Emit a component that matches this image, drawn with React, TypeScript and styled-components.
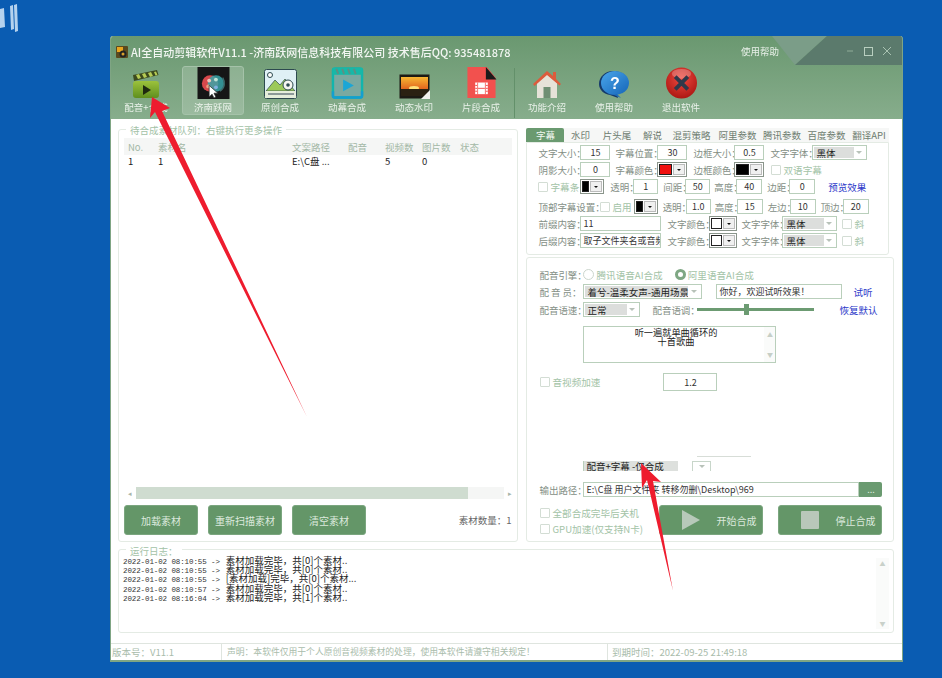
import React from "react";
import styled, { createGlobalStyle } from "styled-components";

const Global = createGlobalStyle`
  html, body { margin: 0; padding: 0; background: #0a5cb2; }
  body { font-family: "Noto Sans CJK SC", "Liberation Sans", sans-serif; font-size: 10px; overflow: hidden; }
  * { box-sizing: border-box; }
`;
const Desktop = styled.div`width: 942px; height: 678px; padding: 36px 0 0 110px; position: relative; background: #0a5cb2; overflow: hidden;`;
const Logo = styled.svg`position: absolute; left: 0; top: 0; filter: blur(.5px);`;
const Overlay = styled.svg`position: absolute; left: 0; top: 0; pointer-events: none; filter: blur(.4px);`;
const Win = styled.div`width: 793px; height: 626px; display: flex; flex-direction: column; background: #fff; border: solid #7fa584; border-width: 0 1px 2px 1px; border-radius: 3px 3px 0 0; overflow: hidden; filter: blur(.5px);`;
const Head = styled.div`height: 83px; flex: none; position: relative; background: linear-gradient(#6a9870, #87ad8c); display: flex; flex-direction: column;`;
const TitleRow = styled.div`height: 30px; display: flex; align-items: center; padding: 2px 0 0 5px; gap: 3px;`;
const Title = styled.div`font-size: 11px; font-weight: 500; color: #f2f6f2; white-space: nowrap;`;
const Corner = styled.svg`position: absolute; right: 0; top: 0;`;
const HelpText = styled.div`position: absolute; left: 630px; top: 8px; font-size: 9.5px; color: #e8f0e8;`;
const Tools = styled.div`display: flex; padding-left: 4px; height: 53px;`;
const Tool = styled.div<{ $active?: boolean }>`
  width: 62px; margin-right: 5px; height: 49px; display: flex; flex-direction: column; align-items: center; justify-content: flex-end;
  border-radius: 3px; border: 1px solid ${p => (p.$active ? "#a5c2a9" : "transparent")}; background: ${p => (p.$active ? "rgba(255,255,255,.18)" : "transparent")};
  color: #e9f1e9; font-size: 9.5px; line-height: 13px; white-space: nowrap;
  svg { display: block; margin-bottom: 2px; }
`;
const ToolSep = styled.div`width: 1px; height: 50px; margin: 2px 1px 0 -3px; background: #63906a;`;
const Main = styled.div`height: 423px; flex: none; display: flex; gap: 8px; padding: 9px 8px 0 7px;`;
const Box = styled.div`border: 1px solid #e4ebe4; border-radius: 3px; position: relative; background: #fff;`;
const Legend = styled.span<{ $top?: number }>`position: absolute; left: 7px; top: ${p => p.$top ?? -6}px; background: #fff; padding: 0 4px; color: #a3c2a7; font-size: 9.5px; line-height: 12px; white-space: nowrap;`;
const LeftPanel = styled(Box)`width: 401px; margin-top: 1px; display: flex; flex-direction: column; padding: 8px 5px 6px;`;
const GridRow = styled.div<{ $head?: boolean }>`
  display: flex; height: ${p => (p.$head ? 17 : 12)}px; align-items: center;
  background: ${p => (p.$head ? "#f5f6f5" : "transparent")};
  color: ${p => (p.$head ? "#a3b8a6" : "#222")}; font-size: 9.5px; white-space: nowrap;
`;
const Cell = styled.div<{ $w: number }>`width: ${p => p.$w}px; flex: none; overflow: hidden; padding-left: 4px;`;
const ListBody = styled.div`flex: 1;`;
const HScroll = styled.div`height: 12px; display: flex; align-items: center; margin: 0 0 6px; gap: 4px; padding-left: 4px; color: #a9b5aa; font-size: 7px;`;
const HTrack = styled.div`flex: 1; height: 12px; background: #f5f6f5;`;
const HThumb = styled.div`width: 332px; height: 12px; background: #cfdcd0;`;
const LeftFoot = styled.div`height: 30px; display: flex; align-items: center; gap: 10px; flex: none;`;
const GreenBtn = styled.div<{ $w: number }>`width: ${p => p.$w}px; height: 30px; flex: none; background: #649668; border: 1px solid #7ba67f; border-radius: 3px; color: #dce9dd; font-size: 10px; display: flex; align-items: center; justify-content: center; gap: 16px;`;
const ActionBtn = styled(GreenBtn)<{ $ml?: number }>`padding-left: 16px; margin-left: ${p => p.$ml ?? 0}px;`;
const Count = styled.div`margin-left: auto; color: #666; font-size: 9.5px; padding-right: 1px;`;
const RightCol = styled.div`width: 368px; display: flex; flex-direction: column;`;
const Tabs = styled.div`display: flex; height: 14px; flex: none; width: 363px; background: #f6f7f6;`;
const Tab = styled.div<{ $w: number; $on?: boolean }>`width: ${p => p.$w}px; display: flex; align-items: center; justify-content: center; font-size: 9.5px; white-space: nowrap; border-radius: 2px 2px 0 0; background: ${p => (p.$on ? "#6a9a70" : "transparent")}; color: ${p => (p.$on ? "#f2f7f2" : "#6e7d70")};`;
const TabBody = styled(Box)`width: 363px; height: 113px; flex: none; padding: 1px 0 0 10px; border-radius: 0 0 3px 3px;`;
const Row = styled.div<{ $h?: number; $top?: number; $ml?: number }>`display: flex; align-items: center; height: ${p => p.$h ?? 17}px; margin-top: ${p => p.$top ?? 0}px; margin-left: ${p => p.$ml ?? 0}px; flex: none;`;
const Label = styled.div<{ $w?: number; $ml?: number }>`width: ${p => (p.$w ? p.$w + "px" : "auto")}; margin-left: ${p => p.$ml ?? 0}px; padding-left: 1px; flex: none; color: #848f86; font-size: 9.5px; white-space: nowrap; letter-spacing: -.05px;`;
const Field = styled.div<{ $w: number; $ml?: number; $left?: boolean; $h?: number }>`
  width: ${p => p.$w}px; height: ${p => p.$h ?? 15}px; margin-left: ${p => p.$ml ?? 0}px; flex: none; border: 1px solid #b9cfbb; background: #fff; color: #333;
  font-size: 9px; display: flex; align-items: center; justify-content: ${p => (p.$left ? "flex-start" : "center")}; padding: ${p => (p.$left ? "0 2px" : "0")}; white-space: nowrap; overflow: hidden;
`;
const Select = styled.div<{ $w: number; $ml?: number; $h?: number }>`
  width: ${p => p.$w}px; height: ${p => p.$h ?? 15}px; margin-left: ${p => p.$ml ?? 0}px; flex: none; border: 1px solid #b9cfbb; background: #fff; display: flex; align-items: stretch; font-size: 9.5px; color: #222; padding: 1px; position: relative;
`;
const SelectText = styled.div<{ $w: number }>`width: ${p => p.$w}px; background: #dcdedc; padding-left: 2px; line-height: 12px; white-space: nowrap; overflow: hidden;`;
const Caret = styled.div`margin-left: auto; width: 0; height: 0; align-self: center; margin-right: 3px; border: 3px solid transparent; border-top-color: #b8c2b9; border-bottom-width: 0;`;
const ColorPick = styled.div<{ $w: number; $ml?: number }>`width: ${p => p.$w}px; margin-left: ${p => p.$ml ?? 0}px; height: 15px; flex: none; border: 1px solid #8a958b; background: #fff; display: flex; align-items: stretch; padding: 1px;`;
const Swatch = styled.div<{ $c: string }>`flex: 1; background: ${p => p.$c}; border: 1px solid #222;`;
const Arrow = styled.div`width: 12px; display: flex; align-items: center; justify-content: center; margin-left: 1px; background: #f0f0f0; border: 1px solid #bbb;
  &::after { content: ""; border: 2.5px solid transparent; border-top-color: #111; border-bottom-width: 0; }
`;
const Check = styled.div<{ $ml?: number }>`width: 10px; height: 10px; margin-left: ${p => p.$ml ?? 0}px; flex: none; border: 1px solid #d3ddd4; border-radius: 1px; background: #fff;`;
const GreenText = styled.div<{ $ml?: number }>`margin-left: ${p => p.$ml ?? 2}px; color: #a3c3a7; font-size: 9.6px; white-space: nowrap;`;
const Link = styled.div<{ $ml: number }>`margin-left: ${p => p.$ml}px; color: #2a37c9; font-size: 9.5px; white-space: nowrap;`;
const LowerPanel = styled(Box)`margin-top: 2px; flex: 1; padding: 8px 0 6px 11px; display: flex; flex-direction: column;`;
const Radio = styled.div<{ $on?: boolean; $ml: number }>`width: 11px; height: 11px; border-radius: 50%; flex: none; margin-left: ${p => p.$ml}px; border: ${p => (p.$on ? "3px solid #7ea783" : "1px solid #ccd6cd")}; background: #fff;`;
const Slider = styled.div`width: 117px; height: 3px; margin-left: 6px; background: #6c9b72; position: relative; flex: none;`;
const Knob = styled.div`position: absolute; left: 47px; top: -4px; width: 5px; height: 11px; background: #6c9b72;`;
const TextBox = styled.div`width: 193px; height: 37px; margin: 8px 0 0 45px; border: 1px solid #b9cfbb; display: flex; flex: none;`;
const TextBoxText = styled.div`flex: 1; text-align: center; font-size: 9.2px; line-height: 9px; color: #222; padding: 1px 0 0 3px;`;
const VBar = styled.div`width: 11px; background: #fafbfa; color: #c6cfc7; font-size: 6px; display: flex; flex-direction: column; justify-content: space-between; align-items: center; padding: 3px 0;`;
const Ghost = styled.div`width: 54px; height: 1px; margin: auto 0 4px 159px; background: #d7ddd7; flex: none;`;
const ClipSelect = styled.div`width: 95px; height: 10px; margin-left: 45px; background: #dde0dd; border-left: 1px solid #b9cfbb; font-size: 9.5px; line-height: 10px; padding-left: 2px; color: #222; overflow: hidden; white-space: nowrap;`;
const ClipCaret = styled.div`width: 19px; height: 10px; margin-left: 14px; border: solid #c8d6ca; border-width: 1px 1px 0 1px; display: flex; align-items: center; justify-content: center; &::after { content: ""; border: 3px solid transparent; border-top-color: #b8c2b9; border-bottom-width: 0; }`;
const Browse = styled.div`width: 23px; height: 15px; flex: none; background: #6a9a70; color: #dde9de; font-size: 9px; text-align: center; line-height: 15px; border-radius: 0 2px 2px 0;`;
const BottomRow = styled.div`display: flex; height: 30px; margin-top: 8px; flex: none;`;
const Checks = styled.div`width: 121px; flex: none; display: flex; flex-direction: column; justify-content: space-between; padding: 2px 0 0 2px; height: 30px;`;
const CheckRow = styled.div`display: flex; align-items: center; height: 12px; white-space: nowrap;`;
const LogBox = styled(Box)`height: 84px; flex: none; margin: 7px 8px 0 7px; padding: 6px 4px 0; display: flex;`;
const LogLines = styled.div`flex: 1;`;
const LogLine = styled.div`height: 9.2px; line-height: 9.2px; white-space: nowrap; font-size: 9.5px; color: #222;`;
const Stamp = styled.span`font-family: "Liberation Mono", monospace; font-size: 7.5px; letter-spacing: -.1px; color: #333; margin-right: 6px;`;
const LogBar = styled.div`width: 13px; margin: 2px 0 3px; background: #fafbfa; display: flex; flex-direction: column; justify-content: space-between; align-items: center; color: #c9d1ca; font-size: 6px; padding: 1px 0;`;
const Status = styled.div`margin-top: auto; height: 17px; flex: none; border-top: 1px solid #dfe5df; display: flex; color: #a9bcab; font-size: 9.5px; line-height: 16px; background: #fff;`;
const StatusCell = styled.div<{ $w?: number; $size?: number }>`width: ${p => (p.$w ? p.$w + "px" : "auto")}; flex: ${p => (p.$w ? "none" : 1)}; font-size: ${p => p.$size ?? 9.5}px; padding-left: ${p => (p.$w ? 1 : 4)}px; border-right: ${p => (p.$w ? "1px solid #dfe5df" : "none")}; white-space: nowrap;`;

const Clapper = () => (
  <svg width="30" height="30" viewBox="0 0 30 30">
    <defs><linearGradient id="cg" x1="0" y1="0" x2="0" y2="1"><stop offset="0" stopColor="#9cc23c" /><stop offset="1" stopColor="#5f8f1e" /></linearGradient></defs>
    <path d="M2 6 26 1l1.500 5L3 12z" fill="#3c4a1e" />
    <path d="M5 6l3-1 2 4-3 1zM11 5l3-1 2 4-3 1zM17 4l3-1 2 4-3 1zM23 3l2-.5 1.500 3.500-2 .6z" fill="#b6cc55" />
    <rect x="2" y="12" width="26" height="17" rx="3" fill="url(#cg)" />
    <path d="M12 16l8 5-8 5z" fill="#1f2a10" />
  </svg>
);
const Reel = () => (
  <svg width="33" height="33" viewBox="0 0 33 33">
    <rect width="33" height="33" fill="#161616" />
    <circle cx="13" cy="17" r="8.500" fill="#d9484c" />
    <circle cx="19" cy="17" r="8.500" fill="#38a5a8" opacity=".85" />
    <circle cx="12" cy="14" r="2" fill="#f2c4b8" /><circle cx="19" cy="13" r="2" fill="#bfe3d6" /><circle cx="11" cy="20" r="2" fill="#f0a080" /><circle cx="19" cy="21" r="2" fill="#7fb0e0" />
    <path d="M26 11c3 5 2 11-3 14" stroke="#3d6b6b" strokeWidth="1.500" fill="none" />
    <path d="M12 19v12l3-3 2 4 2-1-2-4h4z" fill="#fff" stroke="#222" strokeWidth=".7" />
  </svg>
);
const Landscape = () => (
  <svg width="33" height="30" viewBox="0 0 33 30">
    <rect x=".5" y=".5" width="32" height="29" rx="2" fill="#dff0f5" stroke="#2d4a4f" />
    <circle cx="6" cy="6" r="2.500" fill="#fff" stroke="#2d4a4f" />
    <path d="M2 22l9-11 5 5 5-6 10 12z" fill="#9cc95a" stroke="#2d4a4f" strokeWidth=".7" />
    <rect x="1" y="22" width="31" height="7" fill="#e5eedc" />
    <path d="M4 25h26" stroke="#345" strokeWidth="1" />
    <circle cx="24" cy="16" r="5" fill="#f6f6f0" stroke="#2d4a4f" /><circle cx="24" cy="16" r="1.800" fill="#2d4a4f" />
  </svg>
);
const VideoIco = () => (
  <svg width="33" height="33" viewBox="0 0 33 33">
    <rect x="1.500" y="1.500" width="30" height="30" rx="2" fill="#7aa9a0" stroke="#12b5ad" strokeWidth="2.500" />
    <rect x="1" y="1" width="31" height="7" fill="#17b8a8" />
    <path d="M5 2l2 5M11 2l2 5M17 2l2 5M23 2l2 5" stroke="#5f8f83" strokeWidth="2" />
    <path d="M12 13l11 6-11 6z" fill="#1ba6d6" />
    <path d="M1.500 25v5a1.500 1.500 0 0 0 1.500 1.500h27a1.500 1.500 0 0 0 1.500-1.500v-5" stroke="#149fd0" strokeWidth="2.500" fill="none" />
  </svg>
);
const Sunset = () => (
  <svg width="31" height="25" viewBox="0 0 31 25">
    <defs><linearGradient id="sg" x1="0" y1="0" x2="0" y2="1"><stop offset="0" stopColor="#f7b733" /><stop offset="1" stopColor="#e1651e" /></linearGradient></defs>
    <rect x=".5" y=".5" width="30" height="24" fill="#1c1a14" />
    <rect x="2" y="3" width="27" height="12" fill="url(#sg)" />
    <ellipse cx="15" cy="14" rx="5" ry="2" fill="#ffe27a" />
    <rect x="2" y="15" width="27" height="7" fill="#2a2112" />
    <path d="M31 16v9H22z" fill="#f2f2ee" />
  </svg>
);
const Film = () => (
  <svg width="31" height="33" viewBox="0 0 31 33">
    <path d="M1 0h20l9 11v21H1z" fill="#f2514e" />
    <path d="M20 0l11 13H20z" fill="#1c1a1a" />
    <rect x="9" y="16" width="13" height="12" fill="#fff" />
    <path d="M11.500 16v12M19.500 16v12" stroke="#f2514e" strokeWidth=".8" />
    <path d="M9 19h2M9 22h2M9 25h2M20 19h2M20 22h2M20 25h2M12 22h7" stroke="#f2514e" strokeWidth="1" />
  </svg>
);
const House = () => (
  <svg width="30" height="30" viewBox="0 0 30 30">
    <path d="M5 14 15 5l10 9v15H5z" fill="#e6e2d8" />
    <rect x="11.500" y="18" width="7" height="11" fill="#6f8f73" />
    <path d="M1 15 15 2l6 5V3h3v7l5 5-1.500 1.500L15 6 2.500 17z" fill="#dd5b3c" />
  </svg>
);
const Bubble = () => (
  <svg width="32" height="30" viewBox="0 0 32 30">
    <defs><linearGradient id="bb" x1="0" y1="0" x2="1" y2="1"><stop offset="0" stopColor="#4aa6ea" /><stop offset="1" stopColor="#1565b8" /></linearGradient></defs>
    <path d="M15 2C7 2 1 8 1 15c0 6 5 10 11 11l8 3-1-4c7-2 11-6 11-11 0-7-6-12-15-12z" fill="#153a6b" />
    <ellipse cx="17" cy="14" rx="14" ry="12" fill="url(#bb)" />
    <path d="M19 25l4 4-7-3z" fill="#1a6cbd" />
    <text x="17" y="20" textAnchor="middle" fontSize="16" fontWeight="700" fill="#fff" fontFamily="Liberation Sans, sans-serif">?</text>
  </svg>
);
const Exit = () => (
  <svg width="33" height="33" viewBox="0 0 33 33">
    <defs><radialGradient id="rr" cx=".5" cy=".35" r=".7"><stop offset="0" stopColor="#f04a40" /><stop offset="1" stopColor="#a81410" /></radialGradient></defs>
    <circle cx="16.500" cy="16.500" r="16" fill="url(#rr)" />
    <ellipse cx="16.500" cy="7" rx="10" ry="5" fill="#fff" opacity=".25" />
    <path d="M10 10l13 13M23 10 10 23" stroke="#30394a" strokeWidth="4" />
  </svg>
);
const AppIco = () => (
  <svg width="12" height="12" viewBox="0 0 12 12">
    <rect width="12" height="12" rx="1" fill="#5a4a1e" /><rect x="1" y="1" width="6" height="5" fill="#e8a51e" /><circle cx="7" cy="8" r="3.500" fill="#222" /><circle cx="7" cy="8" r="1.500" fill="#d9a12c" />
  </svg>
);
const Play = () => (<svg width="18" height="20" viewBox="0 0 18 20"><path d="M0 0l18 10L0 20z" fill="#b7c9b9" /></svg>);
const Stop = () => (<svg width="18" height="18" viewBox="0 0 18 18"><rect width="18" height="18" rx="1" fill="#b9c7ba" /></svg>);

const tools: [React.ReactNode, string, boolean?][] = [
  [<Clapper />, "配音+合成"], [<Reel />, "济南跃网", true], [<Landscape />, "原创合成"], [<VideoIco />, "动幕合成"], [<Sunset />, "动态水印"], [<Film />, "片段合成"],
];
const tools2: [React.ReactNode, string][] = [[<House />, "功能介绍"], [<Bubble />, "使用帮助"], [<Exit />, "退出软件"]];
const tabs: [string, number][] = [["字幕", 38], ["水印", 32], ["片头尾", 41], ["解说", 30], ["混剪策略", 48], ["阿里参数", 44], ["腾讯参数", 45], ["百度参数", 44], ["翻译API", 41]];
const cols = [30, 134, 56, 37, 37, 38, 30];
const logs = [
  ["2022-01-02 08:10:55 ->", "素材加载完毕，共[0]个素材.."],
  ["2022-01-02 08:10:55 ->", "素材加载完毕，共[0]个素材.."],
  ["2022-01-02 08:10:55 ->", "[素材加载]完毕，共[0]个素材..."],
  ["2022-01-02 08:10:57 ->", "素材加载完毕，共[0]个素材.."],
  ["2022-01-02 08:16:04 ->", "素材加载完毕，共[1]个素材.."],
];

const Color = ({ c, w, ml }: { c: string; w: number; ml?: number }) => (
  <ColorPick $w={w} $ml={ml}><Swatch $c={c} /><Arrow /></ColorPick>
);
const Sel = ({ t, w, tw, ml }: { t: string; w: number; tw: number; ml?: number }) => (
  <Select $w={w} $ml={ml}><SelectText $w={tw}>{t}</SelectText><Caret /></Select>
);

export default function App() {
  return (
    <Desktop>
      <Global />
      <Logo width="20" height="34" viewBox="0 0 20 34">
        <path d="M0 9l4-1 1 19-5 1zM10 6l3-1 1 24-3 1zM14 5l3-1 1 27-3 1z" fill="#b5d2ee" />
      </Logo>
      <Win>
        <Head>
          <Corner width="131" height="29" viewBox="0 0 131 29">
            <path d="M1 0H56L24 29z" fill="#7b9d88" />
            <path d="M56 0H131V29H24z" fill="#5b7a6c" />
            <path d="M76 15h6" stroke="#90ab97" strokeWidth="1" />
            <rect x="93.500" y="11.500" width="8" height="8" fill="none" stroke="#b9cfc0" strokeWidth="1" />
            <path d="M112 11l8 8M120 11l-8 8" stroke="#a9c2b2" strokeWidth="1" />
          </Corner>
          <TitleRow><AppIco /><Title>AI全自动剪辑软件V11.1 -济南跃网信息科技有限公司 技术售后QQ:  935481878</Title></TitleRow>
          <HelpText>使用帮助</HelpText>
          <Tools>
            {tools.map(([i, l, a]) => <Tool key={l} $active={a}>{i}{l}</Tool>)}
            <ToolSep />
            {tools2.map(([i, l]) => <Tool key={l}>{i}{l}</Tool>)}
          </Tools>
        </Head>
        <Main>
          <LeftPanel>
            <Legend>待合成素材队列：右键执行更多操作</Legend>
            <GridRow $head>
              {["No.", "素材名", "文案路径", "配音", "视频数", "图片数", "状态"].map((t, i) => <Cell key={t} $w={cols[i]}>{t}</Cell>)}
            </GridRow>
            <ListBody>
              <GridRow>
                {["1", "1", "E:\\C盘 ...", "", "5", "0", ""].map((t, i) => <Cell key={i} $w={cols[i]}>{t}</Cell>)}
              </GridRow>
            </ListBody>
            <HScroll>◂<HTrack><HThumb /></HTrack>▸</HScroll>
            <LeftFoot>
              <GreenBtn $w={74}>加载素材</GreenBtn>
              <GreenBtn $w={74}>重新扫描素材</GreenBtn>
              <GreenBtn $w={74}>清空素材</GreenBtn>
              <Count>素材数量：1</Count>
            </LeftFoot>
          </LeftPanel>
          <RightCol>
            <Tabs>{tabs.map(([t, w], i) => <Tab key={t} $w={w} $on={i === 0}>{t}</Tab>)}</Tabs>
            <TabBody>
              <Row>
                <Label $w={43}>文字大小：</Label><Field $w={30}>15</Field>
                <Label $w={43} $ml={4}>字幕位置：</Label><Field $w={30}>30</Field>
                <Label $w={42} $ml={5}>边框大小：</Label><Field $w={30}>0.5</Field>
                <Label $w={43} $ml={5}>文字字体：</Label><Sel t="黑体" w={55} tw={40} />
              </Row>
              <Row>
                <Label $w={43}>阴影大小：</Label><Field $w={30}>0</Field>
                <Label $w={43} $ml={4}>字幕颜色：</Label><Color c="#f01010" w={30} />
                <Label $w={42} $ml={5}>边框颜色：</Label><Color c="#000" w={30} />
                <Check $ml={7} /><GreenText>双语字幕</GreenText>
              </Row>
              <Row>
                <Check $ml={1} /><GreenText>字幕条</GreenText>
                <Color c="#000" w={24} ml={1} />
                <Label $w={24} $ml={5}>透明：</Label><Field $w={25}>1</Field>
                <Label $w={23} $ml={4}>间距：</Label><Field $w={25}>50</Field>
                <Label $w={23} $ml={3}>高度：</Label><Field $w={26}>40</Field>
                <Label $w={23} $ml={4}>边距：</Label><Field $w={26}>0</Field>
                <Link $ml={13}>预览效果</Link>
              </Row>
              <Row $top={3}>
                <Label $w={59}>顶部字幕设置：</Label><Check $ml={4} /><GreenText>启用</GreenText>
                <Color c="#000" w={24} ml={2} />
                <Label $w={24} $ml={4}>透明：</Label><Field $w={25}>1.0</Field>
                <Label $w={23} $ml={3}>高度：</Label><Field $w={26}>15</Field>
                <Label $w={23} $ml={4}>左边：</Label><Field $w={26}>10</Field>
                <Label $w={23} $ml={4}>顶边：</Label><Field $w={26}>20</Field>
              </Row>
              <Row>
                <Label $w={43}>前缀内容：</Label><Field $w={81} $left>11</Field>
                <Label $w={43} $ml={5}>文字颜色：</Label><Color c="#fff" w={28} />
                <Label $w={42} $ml={3}>文字字体：</Label><Sel t="黑体" w={55} tw={40} />
                <Check $ml={5} /><GreenText>斜</GreenText>
              </Row>
              <Row>
                <Label $w={43}>后缀内容：</Label><Field $w={81} $left>取子文件夹名或音频</Field>
                <Label $w={43} $ml={5}>文字颜色：</Label><Color c="#fff" w={28} />
                <Label $w={42} $ml={3}>文字字体：</Label><Sel t="黑体" w={55} tw={40} />
                <Check $ml={5} /><GreenText>斜</GreenText>
              </Row>
            </TabBody>
            <LowerPanel>
              <Row>
                <Label $w={45}>配音引擎：</Label>
                <Radio $ml={0} /><GreenText>腾讯语音AI合成</GreenText>
                <Radio $on $ml={12} /><GreenText>阿里语音AI合成</GreenText>
              </Row>
              <Row>
                <Label $w={45}>配 音 员：</Label>
                <Sel t="着兮-温柔女声-通用场景" w={119} tw={103} />
                <Field $w={126} $ml={14} $left>你好，欢迎试听效果！</Field>
                <Link $ml={11}>试听</Link>
              </Row>
              <Row $top={1}>
                <Label $w={45}>配音语速：</Label>
                <Sel t="正常" w={57} tw={42} />
                <Label $w={40} $ml={11}>配音语调：</Label>
                <Slider><Knob /></Slider>
                <Link $ml={25}>恢复默认</Link>
              </Row>
              <TextBox>
                <TextBoxText>听一遍就单曲循环的<br />十首歌曲</TextBoxText>
                <VBar><span>▲</span><span>▼</span></VBar>
              </TextBox>
              <Row $h={18} $top={10}>
                <Check $ml={2} /><GreenText>音视频加速</GreenText>
                <Field $w={54} $h={18} $ml={63}>1.2</Field>
              </Row>
              <Ghost />
              <Row $h={10}>
                <ClipSelect>配音+字幕 -仅合成</ClipSelect><ClipCaret />
              </Row>
              <Row $h={15} $top={11}>
                <Label $w={45}>输出路径：</Label>
                <Field $w={276} $left>E:\C盘 用户文件夹 转移勿删\Desktop\969</Field>
                <Browse>...</Browse>
              </Row>
              <BottomRow>
                <Checks>
                  <CheckRow><Check /><GreenText>全部合成完毕后关机</GreenText></CheckRow>
                  <CheckRow><Check /><GreenText>GPU加速(仅支持N卡)</GreenText></CheckRow>
                </Checks>
                <ActionBtn $w={104}><Play />开始合成</ActionBtn>
                <ActionBtn $w={104} $ml={15}><Stop />停止合成</ActionBtn>
              </BottomRow>
            </LowerPanel>
          </RightCol>
        </Main>
        <LogBox>
          <Legend $top={-5}>运行日志：</Legend>
          <LogLines>
            {logs.map((l, i) => <LogLine key={i}><Stamp>{l[0]}</Stamp>{l[1]}</LogLine>)}
          </LogLines>
          <LogBar><span>▲</span><span>▼</span></LogBar>
        </LogBox>
        <Status>
          <StatusCell $w={111}>版本号：V11.1</StatusCell>
          <StatusCell $w={386} $size={8.8}>&nbsp;&nbsp;声明：本软件仅用于个人原创音视频素材的处理，使用本软件请遵守相关规定！</StatusCell>
          <StatusCell>到期时间：2022-09-25 21:49:18</StatusCell>
        </Status>
      </Win>
      <Overlay width="942" height="678" viewBox="0 0 942 678">
        <path d="M152 97 170 108 162 111 307 417 155 112 150 118z" fill="#ee1c2e" />
        <path d="M641 463 661 482 653 481 673 591 647 480 642 488z" fill="#ee1c2e" />
      </Overlay>
    </Desktop>
  );
}
